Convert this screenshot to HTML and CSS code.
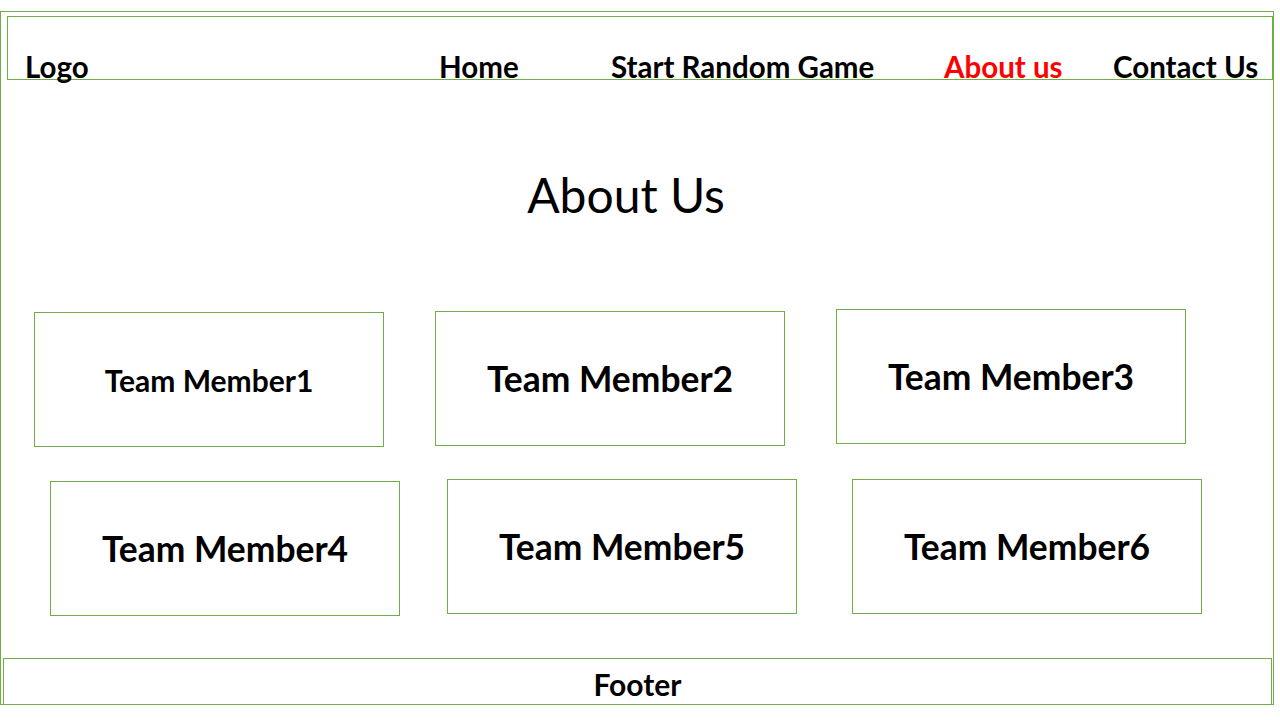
FILE: index.html
```html
<!DOCTYPE html>
<html lang="en">
<head>
<meta charset="utf-8">
<title>About Us</title>
<link rel="stylesheet" href="styles.css">
</head>
<body>
<div class="frame">
  <header class="header">
    <div class="logo">Logo</div>
    <a class="nav-item">Home</a>
    <a class="nav-item">Start Random Game</a>
    <a class="nav-item active">About us</a>
    <a class="nav-item">Contact Us</a>
  </header>
  <main class="main">
    <h1 class="title">About Us</h1>
    <div class="row row-1">
      <div class="card card-1 card-small">Team Member1</div>
      <div class="card card-2">Team Member2</div>
      <div class="card card-3">Team Member3</div>
    </div>
    <div class="row row-2">
      <div class="card card-4">Team Member4</div>
      <div class="card card-5">Team Member5</div>
      <div class="card card-6">Team Member6</div>
    </div>
  </main>
  <footer class="footer">Footer</footer>
</div>
</body>
</html>
```
FILE: styles.css
```css
* { box-sizing: border-box; }
html, body { margin: 0; padding: 0; background: #fff; }
body {
  font-family: Lato, "Open Sans", "Liberation Sans", sans-serif;
  color: #000;
}
.frame {
  margin-top: 11px;
  width: 1274px;
  height: 694px;
  border: 1px solid #70ad47;
  display: flex;
  flex-direction: column;
}
.header {
  margin: 4px 0 0 6px;
  height: 64px;
  border: 1px solid #70ad47;
  display: grid;
  grid-template-columns: 431px 172px 333px 169px 1fr;
  align-items: end;
}
.logo, .nav-item {
  font-weight: 700;
  font-size: 29.5px;
  line-height: 30px;
  margin-bottom: -3px;
  white-space: nowrap;
  color: #000;
  text-decoration: none;
}
.logo { padding-left: 17px; }
.active { color: #ff0000; }
.main { display: flex; flex-direction: column; }
.title {
  margin: 87px 0 0 0;
  padding-right: 22px;
  text-align: center;
  font-weight: 400;
  font-size: 48px;
  line-height: 56px;
}
.row { display: flex; align-items: flex-start; }
.row-1 { margin-top: 86px; padding-left: 33px; }
.row-2 { margin-top: 33px; padding-left: 49px; }
.card {
  width: 350px;
  height: 135px;
  border: 1px solid #70ad47;
  display: flex;
  align-items: center;
  justify-content: center;
  font-weight: 700;
  font-size: 35.4px;
  white-space: nowrap;
}
.card-small { font-size: 30px; }
.card-1 { margin-top: 3px; }
.card-2 { margin-top: 2px; margin-left: 51px; }
.card-3 { margin-left: 51px; }
.card-4 { margin-top: 1px; }
.card-5 { margin-left: 47px; margin-top: -1px; }
.card-6 { margin-left: 55px; margin-top: -1px; }
.footer {
  margin: auto 1px -6px 2px;
  height: 52px;
  border: 1px solid #70ad47;
  display: flex;
  align-items: center;
  justify-content: center;
  font-weight: 700;
  font-size: 30px;
}
```
